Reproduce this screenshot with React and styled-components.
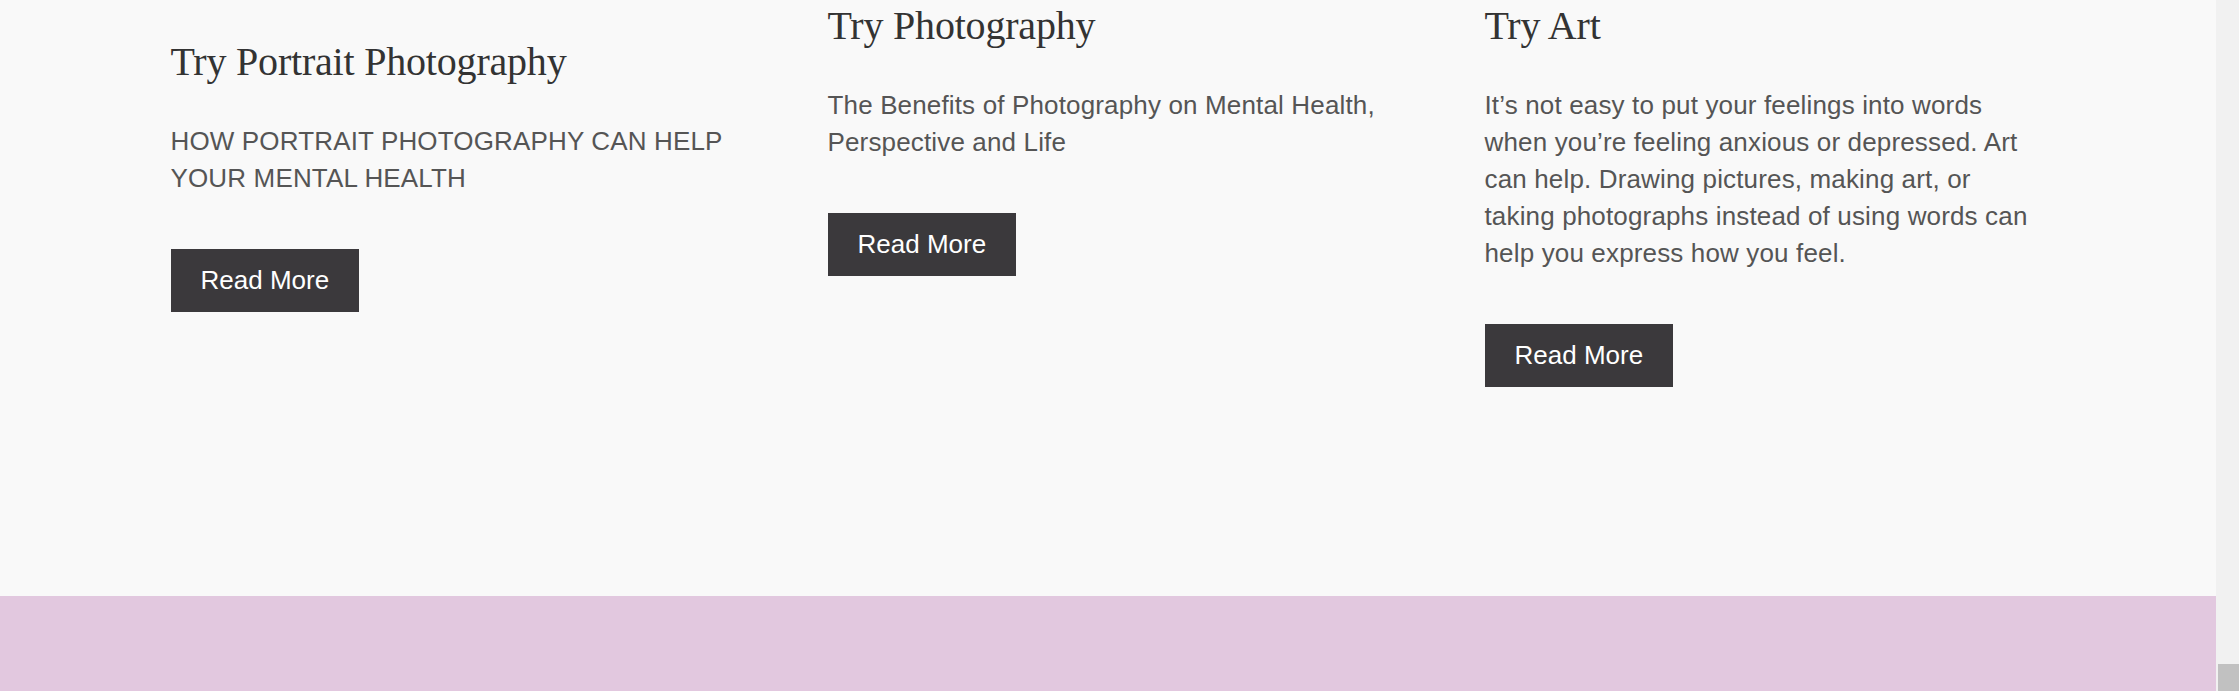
import React from "react";
import styled, { createGlobalStyle } from "styled-components";

const GlobalStyle = createGlobalStyle`
  html, body {
    margin: 0;
    padding: 0;
    overflow: hidden;
  }
  * { box-sizing: border-box; }
`;

const Viewport = styled.div`
  display: flex;
  width: 2239px;
  height: 691px;
  overflow: hidden;
`;

const Page = styled.main`
  flex: 1;
  display: flex;
  flex-direction: column;
  min-width: 0;
`;

const Section = styled.section`
  height: 596px;
  background: #f9f9f9;
  display: flex;
  justify-content: center;
`;

const Grid = styled.div`
  display: grid;
  grid-template-columns: repeat(3, 657px);
  align-items: start;
`;

const Card = styled.article`
  padding: ${(p) => p.$offset}px 51px 0 48px;
`;

const Heading = styled.h2`
  margin: 0;
  font-family: "Liberation Serif", "Times New Roman", serif;
  font-weight: 400;
  font-size: 40px;
  line-height: 52px;
  letter-spacing: -0.2px;
  color: #333333;
`;

const Text = styled.p`
  margin: 35px 0 52px;
  font-family: "Liberation Sans", Arial, sans-serif;
  font-size: 26px;
  line-height: 37px;
  letter-spacing: 0.15px;
  color: #555555;
`;

const Button = styled.a`
  display: inline-block;
  padding: 16px 30px;
  background: #3b393c;
  color: #ffffff;
  font-family: "Liberation Sans", Arial, sans-serif;
  font-size: 26px;
  line-height: 31px;
  text-decoration: none;
`;

const Footer = styled.footer`
  flex: 1;
  background: #e2c8df;
`;

const ScrollTrack = styled.div`
  width: 23px;
  height: 100%;
  background: #f1f1f1;
  display: flex;
  flex-direction: column;
  justify-content: flex-end;
  padding-left: 2px;
`;

const ScrollThumb = styled.div`
  height: 27px;
  background: #c1c1c1;
`;

const cards = [
  {
    title: "Try Portrait Photography",
    text: "HOW PORTRAIT PHOTOGRAPHY CAN HELP YOUR MENTAL HEALTH",
    offset: 36,
  },
  {
    title: "Try Photography",
    text: "The Benefits of Photography on Mental Health, Perspective and Life",
    offset: 0,
  },
  {
    title: "Try Art",
    text: "It\u2019s not easy to put your feelings into words when you\u2019re feeling anxious or depressed. Art can help. Drawing pictures, making art, or taking photographs instead of using words can help you express how you feel.",
    offset: 0,
  },
];

export default function App() {
  return (
    <>
      <GlobalStyle />
      <Viewport>
        <Page>
          <Section>
            <Grid>
              {cards.map((c) => (
                <Card key={c.title} $offset={c.offset}>
                  <Heading>{c.title}</Heading>
                  <Text>{c.text}</Text>
                  <Button href="#">Read More</Button>
                </Card>
              ))}
            </Grid>
          </Section>
          <Footer />
        </Page>
        <ScrollTrack>
          <ScrollThumb />
        </ScrollTrack>
      </Viewport>
    </>
  );
}
